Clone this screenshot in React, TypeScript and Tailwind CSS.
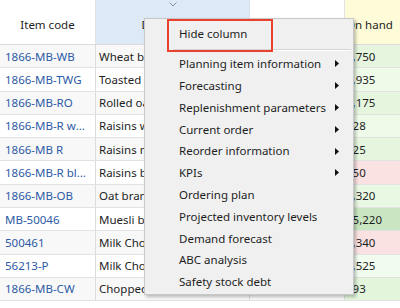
import React from 'react';

const rows = [
  { code: '1866-MB-WB', desc: 'Wheat bran [material]', onHand: '1,750', tone: 'bg-[#e5f5de]' },
  { code: '1866-MB-TWG', desc: 'Toasted wheat germ [material]', onHand: '1,935', tone: 'bg-[#effbe9]' },
  { code: '1866-MB-RO', desc: 'Rolled oats [material]', onHand: '2,175', tone: 'bg-[#e5f5de]' },
  { code: '1866-MB-R white', desc: 'Raisins white [material]', onHand: '128', tone: 'bg-[#effbe9]' },
  { code: '1866-MB R', desc: 'Raisins mix [material]', onHand: '125', tone: 'bg-[#e5f5de]' },
  { code: '1866-MB-R black', desc: 'Raisins black [material]', onHand: '150', tone: 'bg-[#fbe2e2]' },
  { code: '1866-MB-OB', desc: 'Oat bran [material]', onHand: '1,320', tone: 'bg-[#e9f8e3]' },
  { code: 'MB-50046', desc: 'Muesli base [material]', onHand: '15,220', tone: 'bg-[#c9e5c1]' },
  { code: '500461', desc: 'Milk Chocolate chips', onHand: '1,340', tone: 'bg-[#fbe2e2]' },
  { code: '56213-P', desc: 'Milk Chocolate bar', onHand: '1,525', tone: 'bg-[#f1fcef]' },
  { code: '1866-MB-CW', desc: 'Chopped walnuts [material]', onHand: '293', tone: 'bg-[#e3f6dc]' },
];

const menuItems = [
  { label: 'Planning item information', sub: true },
  { label: 'Forecasting', sub: true },
  { label: 'Replenishment parameters', sub: true },
  { label: 'Current order', sub: true },
  { label: 'Reorder information', sub: true },
  { label: 'KPIs', sub: true },
  { label: 'Ordering plan', sub: false },
  { label: 'Projected inventory levels', sub: false },
  { label: 'Demand forecast', sub: false },
  { label: 'ABC analysis', sub: false },
  { label: 'Safety stock debt', sub: false },
];

function SubArrow() {
  return (
    <svg width="4" height="7" viewBox="0 0 4 7" className="shrink-0">
      <path d="M0 0 L4 3.5 L0 7 Z" fill="#111" />
    </svg>
  );
}

export default function App() {
  return (
    <div className="relative w-[400px] h-[308px] overflow-hidden bg-white text-[11.5px] text-[#1e1e1e] font-['Noto_Sans',sans-serif]">
      {/* Header */}
      <div className="flex h-[45px] border-b border-[#dcdcdc]">
        <div className="w-[96px] shrink-0 flex items-center justify-center pt-[5px] bg-white border-r border-[#e2e2e2]">Item code</div>
        <div className="relative w-[154px] shrink-0 flex items-center justify-center pt-[5px] bg-[#dde9f6] border-r border-[#d6e0ea]">
          <svg width="8" height="5" viewBox="0 0 8 5" className="absolute top-[2px] left-[73px]">
            <path d="M0.5 0.5 L4 4 L7.5 0.5" fill="none" stroke="#8a8f96" strokeWidth="1" />
          </svg>
          Description
        </div>
        <div className="w-[95px] shrink-0 flex items-center justify-center pt-[8px] bg-white border-r border-[#e2e2e2]">Material type</div>
        <div className="w-[80px] shrink-0 flex items-center pt-[5px] pl-[1px] bg-[#fefcd8]">On hand</div>
      </div>

      {/* Rows */}
      {rows.map((r, i) => (
        <div key={r.code} className={`flex h-[23.3px] border-b border-[#e2e2e2] ${i % 2 === 0 ? 'bg-[#f8f8f8]' : 'bg-white'}`}>
          <div className="w-[96px] shrink-0 flex items-center pl-[5px] pr-[3px] border-r border-[#dcdcdc] text-[#2c5aa6] overflow-hidden">
            <span className="truncate">{r.code}</span>
          </div>
          <div className="w-[154px] shrink-0 flex items-center px-[3px] border-r border-[#dcdcdc] overflow-hidden">
            <span className="whitespace-nowrap">{r.desc}</span>
          </div>
          <div className="w-[95px] shrink-0 flex items-center px-[3px] border-r border-[#dcdcdc] text-[#2c5aa6]">Material</div>
          <div className={`w-[80px] shrink-0 flex items-center pl-[1px] ${r.tone}`}>{r.onHand}</div>
        </div>
      ))}

      {/* Context menu */}
      <div className="absolute left-[144px] top-[18px] w-[210px] h-[277px] bg-[#f0f0f0] border border-[#c8c8c8] shadow-[2px_2px_3px_rgba(0,0,0,0.25)] flex flex-col">
        <div className="h-[30px] flex items-center pl-[34px]">Hide column</div>
        <div className="ml-[28px] mr-[2px] h-[2px] border-t border-[#d5d5d5] border-b border-b-white" />
        <div className="flex flex-col pt-[2px]">
          {menuItems.map((m) => (
            <div key={m.label} className="h-[21.8px] flex items-center justify-between pl-[34px] pr-[14px]">
              <span className="whitespace-nowrap">{m.label}</span>
              {m.sub && <SubArrow />}
            </div>
          ))}
        </div>
      </div>

      {/* Highlight annotation */}
      <div className="absolute left-[167px] top-[19px] w-[106px] h-[33px] border-2 border-[#e8412d]" />
    </div>
  );
}
